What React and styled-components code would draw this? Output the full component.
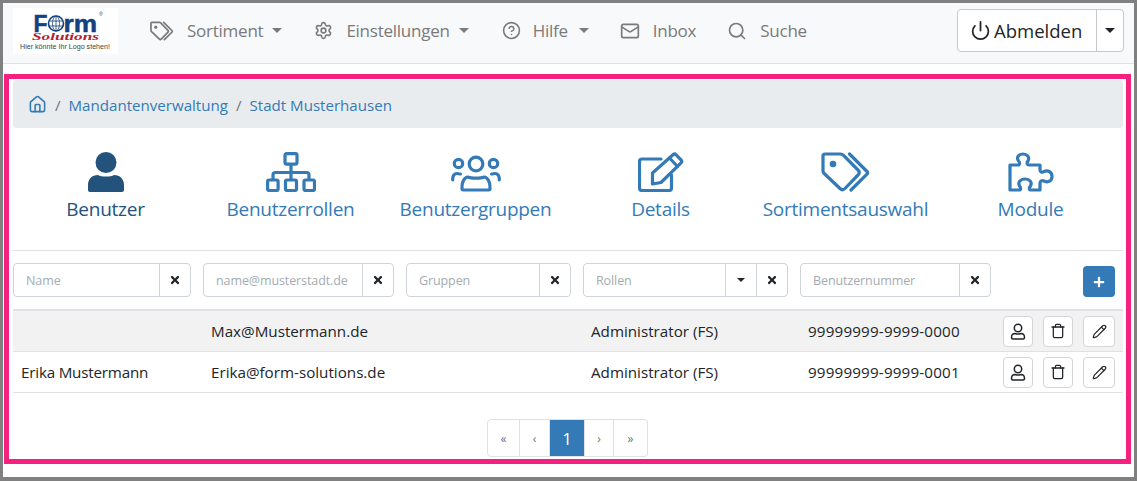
import React from "react";
import styled, { createGlobalStyle } from "styled-components";
import { Settings, CircleHelp, Mail, Search, Power, House, Trash, Pencil } from "lucide-react";
import { FaTimes, FaPlus } from "react-icons/fa";

const Global = createGlobalStyle`
  html, body { margin: 0; padding: 0; background: #fff; }
  body { font-family: "Open Sans", "Noto Sans", sans-serif; color: #212529; }
  * { box-sizing: border-box; }
`;

const Page = styled.div`
  width: 1137px;
  height: 481px;
  border: 3px solid #808080;
  border-bottom-width: 4px;
  background: #fff;
  overflow: hidden;
`;

const Navbar = styled.nav`
  display: flex;
  align-items: center;
  height: 61px;
  padding: 0 10px 5px 10px;
  background: #f8f9fa;
  border-bottom: 1px solid #dee2e6;
`;

const LogoBox = styled.div`
  width: 105px;
  height: 46px;
  margin-right: 32px;
  background: #fff;
  svg { display: block; }
`;

const NavItem = styled.div`
  display: flex;
  align-items: center;
  gap: ${(p) => p.$gap || 13}px;
  margin-right: ${(p) => p.$after}px;
  font-size: 17px;
  letter-spacing: -0.25px;
  color: #7a7a7a;
  white-space: nowrap;
`;

const Caret = styled.span`
  display: inline-block;
  width: 0;
  height: 0;
  margin-left: ${(p) => p.$left ?? 0}px;
  border-top: ${(p) => p.$size || 5}px solid ${(p) => p.$color || "#7a7a7a"};
  border-left: ${(p) => p.$size || 5}px solid transparent;
  border-right: ${(p) => p.$size || 5}px solid transparent;
`;

const LogoutGroup = styled.div`
  display: flex;
  margin-left: auto;
  height: 43px;
  border: 1px solid #c9c9c9;
  border-radius: 4px;
  background: #fff;
`;

const LogoutButton = styled.div`
  display: flex;
  align-items: center;
  gap: 3px;
  width: 138px;
  padding-left: 12px;
  font-size: 18.5px;
  color: #212529;
`;

const LogoutCaret = styled.div`
  display: flex;
  align-items: center;
  justify-content: center;
  width: 27px;
  border-left: 1px solid #c9c9c9;
`;

const Frame = styled.main`
  height: 390px;
  margin: 10px 3px 0 1px;
  padding: 1px 3px 0 4px;
  border: 5px solid #f4217f;
`;

const Breadcrumb = styled.div`
  display: flex;
  align-items: center;
  height: 48px;
  padding: 1px 0 0 15px;
  background: #e9ecef;
  border-radius: 4px;
  font-size: 15.1px;
  color: #337ab7;
`;

const Sep = styled.span`
  margin: 0 8px;
  color: #6c757d;
`;

const Tabs = styled.div`
  display: grid;
  grid-template-columns: repeat(6, 1fr);
  height: 123px;
  border-bottom: 1px solid #dee2e6;
`;

const Tab = styled.div`
  display: flex;
  flex-direction: column;
  align-items: center;
  padding-top: 24px;
  font-size: 19px;
  letter-spacing: -0.25px;
  color: ${(p) => (p.$active ? "#23527c" : "#337ab7")};
  svg { display: block; }
`;

const TabLabel = styled.div`
  margin-top: 5px;
  line-height: 24px;
  white-space: nowrap;
`;

const Filters = styled.div`
  display: flex;
  gap: 12px;
  height: 58px;
  padding-top: 12px;
`;

const Filter = styled.div`
  display: flex;
  width: ${(p) => p.$width}px;
  height: 34px;
  border: 1px solid #ced4da;
  border-radius: 4px;
  background: #fff;
`;

const FilterInput = styled.div`
  flex: 1;
  padding-left: 12px;
  font-size: 12.5px;
  line-height: 34px;
  letter-spacing: -0.1px;
  color: #a4abb2;
  white-space: nowrap;
  overflow: hidden;
`;

const FilterBtn = styled.div`
  display: flex;
  align-items: center;
  justify-content: center;
  width: ${(p) => p.$width || 31}px;
  border-left: 1px solid #ced4da;
  color: #212529;
`;

const AddButton = styled.div`
  display: flex;
  align-items: center;
  justify-content: center;
  width: 32px;
  height: 31px;
  margin: 3px 8px 0 auto;
  background: #337ab7;
  border-radius: 4px;
  color: #fff;
`;

const Table = styled.div`
  border-top: 2px solid #dee2e6;
`;

const Row = styled.div`
  display: grid;
  grid-template-columns: 190px 380px 217px 195px 1fr;
  align-items: center;
  height: 41px;
  border-bottom: 1px solid #dee2e6;
  background: ${(p) => (p.$striped ? "#f2f2f2" : "#fff")};
  font-size: 15.2px;
  color: #212529;
`;

const Cell = styled.div`
  padding-left: 8px;
  white-space: nowrap;
  letter-spacing: ${(p) => p.$spacing || 0}px;
`;

const Actions = styled.div`
  display: flex;
  gap: 10px;
  padding-left: 8px;
`;

const ActionBtn = styled.div`
  display: flex;
  align-items: center;
  justify-content: center;
  width: ${(p) => p.$width || 30}px;
  height: 31px;
  border: 1px solid #d5d5d5;
  border-radius: 4px;
  background: #fff;
  color: #212529;
`;

const Pager = styled.div`
  display: flex;
  justify-content: center;
  margin-top: 26px;
  margin-right: 1px;
`;

const PageLink = styled.div`
  display: flex;
  align-items: center;
  justify-content: center;
  width: ${(p) => p.$width}px;
  height: 38px;
  border: 1px solid #dee2e6;
  border-left-width: ${(p) => (p.$first ? 1 : 0)}px;
  border-radius: ${(p) => (p.$first ? "4px 0 0 4px" : p.$last ? "0 4px 4px 0" : "0")};
  background: ${(p) => (p.$active ? "#337ab7" : "#fff")};
  color: ${(p) => (p.$active ? "#fff" : "#6c757d")};
  font-size: ${(p) => (p.$active ? 17 : 12)}px;
`;

const Logo = () => (
  <svg width="105" height="46" viewBox="0 0 105 46">
    <g fontFamily="'Liberation Sans', sans-serif" fontWeight="700" fill="#14417f" stroke="#14417f" strokeWidth="0.5">
      <text x="20.500" y="23.500" fontSize="23" textLength="14" lengthAdjust="spacingAndGlyphs">F</text>
      <text x="50.500" y="23.500" fontSize="23" textLength="33.500" lengthAdjust="spacingAndGlyphs">rm</text>
    </g>
    <g fill="none" stroke="#14417f">
      <circle cx="43" cy="15.500" r="7.500" strokeWidth="1.600" />
      <ellipse cx="43" cy="15.500" rx="3.500" ry="7.500" strokeWidth="0.800" />
      <path d="M36 13h14M36 18h14M43 8v15" strokeWidth="0.800" />
    </g>
    <text x="86" y="8" fontSize="5" fontFamily="'Liberation Sans', sans-serif" fill="#14417f">®</text>
    <text x="19" y="32" fontSize="10.500" fontFamily="'Liberation Serif', serif" fontStyle="italic" fontWeight="700" fill="#b3202c" textLength="67" lengthAdjust="spacingAndGlyphs">Solutions</text>
    <text x="7" y="41" fontSize="7.200" fontFamily="'Liberation Sans', sans-serif" fill="#444" textLength="90" lengthAdjust="spacingAndGlyphs">Hier könnte Ihr Logo stehen!</text>
  </svg>
);

const TagsIcon = ({ w = 50, h = 40, sw = 3.2 }) => (
  <svg width={w} height={h} viewBox="0 0 50 40" fill="none" stroke="currentColor" strokeWidth={sw} strokeLinejoin="round" strokeLinecap="round">
    <path d="M4 2h15.500c1 0 2 .4 2.800 1.200L37 18c1.600 1.600 1.600 3.400 0 5L24 36.500c-1.600 1.600-3.400 1.600-5 0L3.200 21.500C2.400 20.700 2 19.700 2 18.700V4c0-1.200.8-2 2-2z" />
    <path d="M28.500 2L46 19.500c1 1 1 1.600 0 2.600L30 38" />
    <circle cx="12" cy="12" r="3.300" fill="currentColor" stroke="none" />
  </svg>
);

const SitemapIcon = () => (
  <svg width="50" height="40" viewBox="0 0 50 40" fill="none" stroke="currentColor" strokeWidth="3.200" strokeLinejoin="round">
    <rect x="19" y="1.600" width="12" height="10.500" rx="1.500" />
    <rect x="1.600" y="28" width="10.500" height="10.500" rx="1.500" />
    <rect x="19.500" y="28" width="11" height="10.500" rx="1.500" />
    <rect x="38" y="28" width="10.500" height="10.500" rx="1.500" />
    <path d="M25 12v16M7 28v-5c0-1.500 1-2.500 2.500-2.500h31c1.500 0 2.500 1 2.500 2.500v5" />
  </svg>
);

const UsersIcon = () => (
  <svg width="50" height="40" viewBox="0 -3 50 40" fill="none" stroke="currentColor" strokeWidth="3.200" strokeLinecap="round">
    <circle cx="25" cy="9" r="6.800" />
    <circle cx="7.500" cy="8.500" r="4.200" />
    <circle cx="42.500" cy="8.500" r="4.200" />
    <path d="M11 34c-.5-6 2-12 6-12 3 1.500 13 1.500 16 0 4 0 6.500 6 6 12-.1.800-.6 1-1.200 1H12.200c-.6 0-1.100-.2-1.200-1z" strokeLinejoin="round" />
    <path d="M1.700 25c-.3-4 1.500-6.500 4.300-6.500 1.200 0 2 .5 3.500.5M48.300 25c.3-4-1.500-6.500-4.300-6.500-1.200 0-2 .5-3.500.5" />
  </svg>
);

const EditIcon = () => (
  <svg width="46" height="40" viewBox="0 0 46 40" fill="none" stroke="currentColor" strokeWidth="3.200" strokeLinejoin="round" strokeLinecap="round">
    <path d="M23 7H4C2.500 7 1.500 8 1.500 9.500v26.500c0 1.500 1 2.500 2.500 2.500h27c1.500 0 2.500-1 2.500-2.500V23" />
    <path d="M14.500 21L35 2.800c1-.9 2.300-.9 3.200 0l4.800 5c.9 1 .9 2.200 0 3.100L23 30.500l-8.500 1.500z" />
    <path d="M31.500 6l8 8.500" />
  </svg>
);

const PuzzleIcon = () => (
  <svg width="46" height="40" viewBox="0 0 46 40" fill="none" stroke="currentColor" strokeWidth="3.200" strokeLinejoin="round">
    <path d="M2 38V13h8c2 0 2-3 .5-4C8 5 11 2 15 2s7 3 5 7c-1.500 1.500-1 4 1 4h11v5c0 2 2 3 4 1.500 4-2 8 .5 8 5s-4 6.500-8 4.500c-2-1-4 0-4 2v7h-9c-2 0-2-2.500-.5-4 2-4-1-7-5.500-7s-7.500 3-5.500 7c1.500 1.500 1.500 4-.5 4z" />
  </svg>
);

const UserSolid = () => (
  <svg width="36" height="40" viewBox="0 0 36 40" fill="currentColor">
    <circle cx="18" cy="10.500" r="10.500" />
    <path d="M10 23c3 2 13 2 16 0 6 0 10 4 10 10v5c0 1.200-.8 2-2 2H2c-1.200 0-2-.8-2-2v-5c0-6 4-10 10-10z" />
  </svg>
);

const UserOutline = () => (
  <svg width="16" height="17" viewBox="0 0 16 17" fill="none" stroke="currentColor" strokeWidth="1.500">
    <circle cx="8" cy="5" r="3.700" />
    <path d="M1.500 14.500c0-2.800 1.500-4 3.500-4 1.500.6 4.500.6 6 0 2 0 3.500 1.200 3.500 4 0 1-.5 1.500-1.500 1.500H3c-1 0-1.500-.5-1.500-1.500z" />
  </svg>
);

const Times = () => <FaTimes size={12} />;

const tabs = [
  { label: "Benutzer", icon: <UserSolid />, active: true },
  { label: "Benutzerrollen", icon: <SitemapIcon /> },
  { label: "Benutzergruppen", icon: <UsersIcon /> },
  { label: "Details", icon: <EditIcon /> },
  { label: "Sortimentsauswahl", icon: <TagsIcon /> },
  { label: "Module", icon: <PuzzleIcon /> },
];

const rows = [
  { name: "", mail: "Max@Mustermann.de", role: "Administrator (FS)", nr: "99999999-9999-0000", striped: true },
  { name: "Erika Mustermann", mail: "Erika@form-solutions.de", role: "Administrator (FS)", nr: "99999999-9999-0001" },
];

export default function App() {
  return (
    <Page>
      <Global />
      <Navbar>
        <LogoBox>
          <Logo />
        </LogoBox>
        <NavItem $after={32}>
          <TagsIcon w={24} h={20} sw={3.600} />
          <span>Sortiment</span>
          <Caret $left={-4} />
        </NavItem>
        <NavItem $after={33}>
          <Settings size={19} strokeWidth={2} />
          <span>Einstellungen</span>
          <Caret $left={-4} />
        </NavItem>
        <NavItem $after={31} $gap={12}>
          <CircleHelp size={19} strokeWidth={2} />
          <span>Hilfe</span>
          <Caret $left={-1} />
        </NavItem>
        <NavItem $after={31}>
          <Mail size={20} strokeWidth={2} />
          <span>Inbox</span>
        </NavItem>
        <NavItem $after={0}>
          <Search size={20} strokeWidth={2} />
          <span>Suche</span>
        </NavItem>
        <LogoutGroup>
          <LogoutButton>
            <Power size={21} strokeWidth={2} />
            Abmelden
          </LogoutButton>
          <LogoutCaret>
            <Caret $color="#212529" />
          </LogoutCaret>
        </LogoutGroup>
      </Navbar>
      <Frame>
        <Breadcrumb>
          <House size={19} strokeWidth={2} />
          <Sep>/</Sep>
          Mandantenverwaltung
          <Sep>/</Sep>
          Stadt Musterhausen
        </Breadcrumb>
        <Tabs>
          {tabs.map((t) => (
            <Tab key={t.label} $active={t.active}>
              {t.icon}
              <TabLabel>{t.label}</TabLabel>
            </Tab>
          ))}
        </Tabs>
        <Filters>
          <Filter $width={178}>
            <FilterInput>Name</FilterInput>
            <FilterBtn><Times /></FilterBtn>
          </Filter>
          <Filter $width={191}>
            <FilterInput>name@musterstadt.de</FilterInput>
            <FilterBtn><Times /></FilterBtn>
          </Filter>
          <Filter $width={165}>
            <FilterInput>Gruppen</FilterInput>
            <FilterBtn><Times /></FilterBtn>
          </Filter>
          <Filter $width={205}>
            <FilterInput>Rollen</FilterInput>
            <FilterBtn><Caret $color="#212529" $size={4} /></FilterBtn>
            <FilterBtn><Times /></FilterBtn>
          </Filter>
          <Filter $width={191}>
            <FilterInput>Benutzernummer</FilterInput>
            <FilterBtn><Times /></FilterBtn>
          </Filter>
          <AddButton><FaPlus size={12} /></AddButton>
        </Filters>
        <Table>
          {rows.map((r) => (
            <Row key={r.nr} $striped={r.striped}>
              <Cell $spacing={-0.2}>{r.name}</Cell>
              <Cell>{r.mail}</Cell>
              <Cell>{r.role}</Cell>
              <Cell $spacing={0.17}>{r.nr}</Cell>
              <Actions>
                <ActionBtn><UserOutline /></ActionBtn>
                <ActionBtn><Trash size={16} strokeWidth={1.900} /></ActionBtn>
                <ActionBtn $width={32}><Pencil size={15} strokeWidth={1.900} /></ActionBtn>
              </Actions>
            </Row>
          ))}
        </Table>
        <Pager>
          <PageLink $width={33} $first>«</PageLink>
          <PageLink $width={30}>‹</PageLink>
          <PageLink $width={35} $active>1</PageLink>
          <PageLink $width={29}>›</PageLink>
          <PageLink $width={34} $last>»</PageLink>
        </Pager>
      </Frame>
    </Page>
  );
}
